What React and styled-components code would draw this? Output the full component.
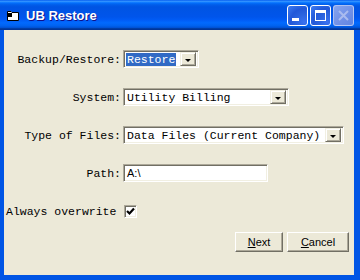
import React from 'react';
import styled, { createGlobalStyle } from 'styled-components';

const Global = createGlobalStyle`
  html, body { margin: 0; padding: 0; background: #ECE9D8; }
  * { box-sizing: border-box; }
`;

const Window = styled.div`
  width: 360px;
  height: 280px;
  display: flex;
  flex-direction: column;
  background: #0054E3;
  overflow: hidden;
`;

const TitleBar = styled.div`
  height: 30px;
  flex: none;
  display: flex;
  align-items: center;
  padding: 0 6px 0 7px;
  background: linear-gradient(to bottom, #0058ee 0%, #3593ff 4%, #288eff 6%, #127dff 8%, #036ffc 10%, #0262ee 14%, #0057e5 20%, #0054e3 24%, #0055eb 56%, #005bf5 66%, #026afe 76%, #0062ef 86%, #0052d6 92%, #0040ab 94%, #003092 100%);
`;

const TitleText = styled.div`
  flex: 1;
  margin-left: 7px;
  font-family: "Liberation Sans", Arial, sans-serif;
  font-weight: bold;
  font-size: 13px;
  color: #fff;
  text-shadow: 1px 1px #0f1089;
`;

const TitleButtons = styled.div`
  display: flex;
  gap: 2px;
`;

const TitleButton = styled.div`
  width: 21px;
  height: 21px;
  border-radius: 3px;
  border: 1px solid ${p => (p.$disabled ? 'rgba(255,255,255,0.45)' : '#fff')};
  background: ${p => (p.$disabled
    ? 'linear-gradient(135deg, #86a4ee 0%, #6f8fe6 60%, #6186e2 100%)'
    : 'radial-gradient(circle at 85% 85%, #3a72f0 0%, #2b63de 35%, #2258d8 60%, #3f7ef4 100%)')};
  display: flex;
  align-items: center;
  justify-content: center;
  svg { display: block; }
`;

const Client = styled.div`
  flex: 1;
  display: flex;
  flex-direction: column;
  background: #ECE9D8;
  border-style: solid;
  border-color: #0055E5;
  border-width: 0 6px 5px 4px;
`;

const Form = styled.div`
  display: grid;
  grid-template-columns: 117px 1fr;
  grid-auto-rows: 18px;
  column-gap: 2px;
  row-gap: 20px;
  align-items: center;
  padding-top: 20px;
`;

const Label = styled.div`
  justify-self: ${p => (p.$left ? 'start' : 'end')};
  margin-left: ${p => (p.$left ? '2px' : '0')};
  font-family: "Liberation Mono", "DejaVu Sans Mono", monospace;
  font-size: 11.5px;
  color: #000;
  white-space: nowrap;
`;

const Combo = styled.div`
  width: ${p => p.$w}px;
  height: 18px;
  display: flex;
  align-items: center;
  background: #fff;
  border-top: 1px solid #ACA899;
  border-left: 1px solid #ACA899;
  border-right: 1px solid #fff;
  border-bottom: 1px solid #fff;
  box-shadow: inset 1px 1px #716F64, inset -1px -1px #F1EFE2;
  padding: 1px 2px 1px 1px;
`;

const ComboText = styled.span`
  flex: 1;
  display: flex;
  align-items: center;
  font-family: "Liberation Mono", "DejaVu Sans Mono", monospace;
  font-size: 11.5px;
  color: #000;
  white-space: nowrap;
  overflow: hidden;
  padding-left: 2px;
`;

const Selected = styled.span`
  background: #316AC5;
  color: #fff;
  padding: 0 1px;
  margin-left: -1px;
  line-height: 13px;
`;

const DropButton = styled.div`
  width: 16px;
  height: 14px;
  flex: none;
  background: #ECE9D8;
  border-top: 1px solid #F1EFE2;
  border-left: 1px solid #F1EFE2;
  border-right: 1px solid #716F64;
  border-bottom: 1px solid #716F64;
  box-shadow: inset 1px 1px #fff, inset -1px -1px #ACA899;
  display: flex;
  align-items: center;
  justify-content: center;
  &::after {
    content: '';
    margin-top: 2px;
    border-left: 3px solid transparent;
    border-right: 3px solid transparent;
    border-top: 3px solid #000;
  }
`;

const TextBox = styled.div`
  width: ${p => p.$w}px;
  height: 18px;
  display: flex;
  align-items: center;
  background: #fff;
  border-top: 1px solid #ACA899;
  border-left: 1px solid #ACA899;
  border-right: 1px solid #fff;
  border-bottom: 1px solid #fff;
  box-shadow: inset 1px 1px #716F64, inset -1px -1px #F1EFE2;
  padding-left: 3px;
  font-family: "Liberation Sans", Arial, sans-serif;
  font-size: 11px;
  color: #000;
`;

const CheckBox = styled.div`
  width: 13px;
  height: 13px;
  margin-left: 1px;
  background: #fff;
  border-top: 1px solid #ACA899;
  border-left: 1px solid #ACA899;
  border-right: 1px solid #fff;
  border-bottom: 1px solid #fff;
  box-shadow: inset 1px 1px #716F64, inset -1px -1px #F1EFE2;
  display: flex;
  align-items: center;
  justify-content: center;
  svg { display: block; }
`;

const ButtonRow = styled.div`
  display: flex;
  justify-content: flex-end;
  gap: 4px;
  margin-top: 12px;
  padding-right: 5px;
`;

const Button = styled.div`
  width: ${p => p.$w}px;
  height: 20px;
  display: flex;
  align-items: center;
  justify-content: center;
  background: #ECE9D8;
  border-top: 1px solid #fff;
  border-left: 1px solid #fff;
  border-right: 1px solid #716F64;
  border-bottom: 1px solid #716F64;
  box-shadow: inset -1px -1px #ACA899;
  font-family: "Liberation Sans", Arial, sans-serif;
  font-size: 11px;
  color: #000;
`;

const Key = styled.span`
  text-decoration: underline;
`;

const FolderIcon = () => (
  <svg width="12" height="11" viewBox="0 0 12 11">
    <path d="M0.5 1.5 H4 L5 2.5 H11.5 V10.5 H0.5 Z" fill="#fff" stroke="#000" />
    <rect x="1" y="3" width="4" height="4" fill="#000" />
  </svg>
);

export default function App() {
  return (
    <>
      <Global />
      <Window>
        <TitleBar>
          <FolderIcon />
          <TitleText>UB Restore</TitleText>
          <TitleButtons>
            <TitleButton>
              <svg width="19" height="19" viewBox="0 0 19 19">
                <rect x="4" y="12" width="7" height="3" fill="#fff" />
              </svg>
            </TitleButton>
            <TitleButton>
              <svg width="19" height="19" viewBox="0 0 19 19">
                <rect x="4.5" y="4.5" width="10" height="10" fill="none" stroke="#fff" />
                <rect x="4" y="4" width="11" height="3" fill="#fff" />
              </svg>
            </TitleButton>
            <TitleButton $disabled>
              <svg width="19" height="19" viewBox="0 0 19 19">
                <path d="M5 5 L14 14 M14 5 L5 14" stroke="#a9bbef" strokeWidth="2" />
              </svg>
            </TitleButton>
          </TitleButtons>
        </TitleBar>
        <Client>
          <Form>
            <Label>Backup/Restore:</Label>
            <Combo $w={76}>
              <ComboText><Selected>Restore</Selected></ComboText>
              <DropButton />
            </Combo>

            <Label>System:</Label>
            <Combo $w={166}>
              <ComboText>Utility Billing</ComboText>
              <DropButton />
            </Combo>

            <Label>Type of Files:</Label>
            <Combo $w={221}>
              <ComboText>Data Files (Current Company)</ComboText>
              <DropButton />
            </Combo>

            <Label>Path:</Label>
            <TextBox $w={145}>A:\</TextBox>

            <Label $left>Always overwrite</Label>
            <CheckBox>
              <svg width="9" height="9" viewBox="0 0 9 9">
                <path d="M1 4 L3.5 6.5 L8 1.5" fill="none" stroke="#000" strokeWidth="2.2" />
              </svg>
            </CheckBox>
          </Form>
          <ButtonRow>
            <Button $w={48}><span><Key>N</Key>ext</span></Button>
            <Button $w={62}><span><Key>C</Key>ancel</span></Button>
          </ButtonRow>
        </Client>
      </Window>
    </>
  );
}
